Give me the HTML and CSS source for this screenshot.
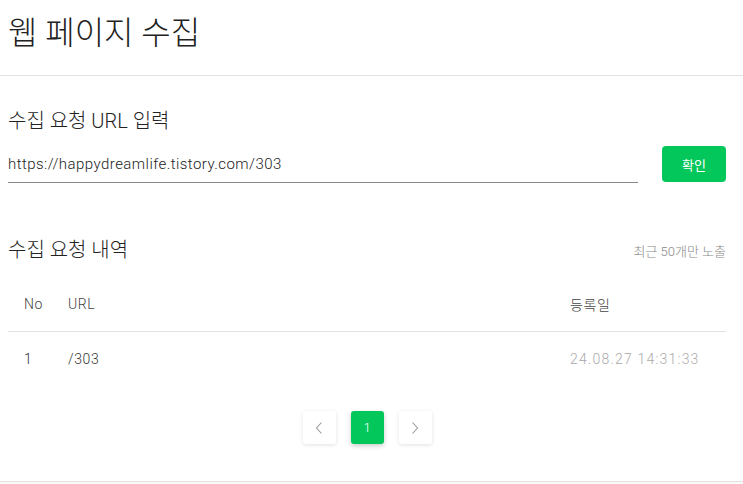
FILE: index.html
```html
<!DOCTYPE html>
<html lang="ko">
<head>
<meta charset="utf-8">
<title>웹 페이지 수집</title>
<link rel="stylesheet" href="styles.css">
</head>
<body>
<header class="page-header">
  <h1 class="page-title">웹 페이지 수집</h1>
</header>
<main class="content">
  <section class="section">
    <h2 class="section-title">수집 요청 URL 입력</h2>
    <div class="input-row">
      <input class="url-input" type="text" value="https://happydreamlife.tistory.com/303">
      <button class="btn-confirm">확인</button>
    </div>
  </section>
  <section class="section history">
    <div class="history-head">
      <h2 class="section-title">수집 요청 내역</h2>
      <span class="note">최근 50개만 노출</span>
    </div>
    <div class="table">
      <div class="row head">
        <span class="c-no">No</span>
        <span class="c-url">URL</span>
        <span class="c-date">등록일</span>
      </div>
      <div class="row body">
        <span class="c-no">1</span>
        <span class="c-url">/303</span>
        <span class="c-date date">24.08.27 14:31:33</span>
      </div>
    </div>
    <nav class="pager">
      <button class="pg-btn" aria-label="이전">
        <svg width="10" height="14" viewBox="0 0 10 14"><path d="M7.5 1.5 L2.5 7 L7.5 12.5" fill="none" stroke="#999" stroke-width="1.1"/></svg>
      </button>
      <button class="pg-btn active">1</button>
      <button class="pg-btn" aria-label="다음">
        <svg width="10" height="14" viewBox="0 0 10 14"><path d="M2.5 1.5 L7.5 7 L2.5 12.5" fill="none" stroke="#999" stroke-width="1.1"/></svg>
      </button>
    </nav>
  </section>
</main>
<footer class="page-footer"></footer>
</body>
</html>
```
FILE: styles.css
```css
html, body {
  margin: 0;
  padding: 0;
  background: #fff;
}
body {
  font-family: "Roboto", "Noto Sans CJK KR", sans-serif;
  font-weight: 300;
  color: #222;
}
.page-header {
  border-bottom: 1px solid #e2e2e2;
  height: 76px;
  box-sizing: border-box;
  padding: 10px 8px 0;
}
.page-title {
  margin: 0;
  font-size: 32px;
  font-weight: 300;
  line-height: 46px;
}
.content {
  padding: 0 17px 0 8px;
}
.section {
  padding-top: 30px;
}
.section-title {
  margin: 0;
  font-size: 20px;
  font-weight: 300;
  line-height: 30px;
}
.input-row {
  display: flex;
  align-items: flex-start;
  gap: 24px;
  margin-top: 11px;
}
.url-input {
  flex: 1;
  border: none;
  border-bottom: 1px solid #888;
  font-family: "Roboto", "Noto Sans CJK KR", sans-serif;
  font-size: 15px;
  font-weight: 300;
  letter-spacing: 0.45px;
  color: #222;
  padding: 7px 0 8px;
  outline: none;
  margin: 0;
  height: 36px;
  box-sizing: border-box;
}
.btn-confirm {
  width: 64px;
  height: 36px;
  margin-top: -1px;
  background: #03c75a;
  color: #fff;
  border: none;
  border-radius: 4px;
  font-family: "Noto Sans CJK KR", sans-serif;
  font-size: 13px;
  font-weight: 400;
}
.history {
  padding-top: 52px;
}
.history-head {
  display: flex;
  justify-content: space-between;
  align-items: center;
}
.note {
  font-size: 13px;
  color: #888;
}
.table {
  margin-top: 11px;
  font-size: 14px;
  letter-spacing: 0.6px;
}
.row {
  display: flex;
  align-items: center;
  padding: 0 16px;
}
.row.head {
  height: 55px;
  border-bottom: 1px solid #e2e2e2;
  color: #444;
}
.row.body {
  height: 54px;
  color: #333;
}
.c-no { width: 44px; }
.c-url { flex: 1; }
.c-date { width: 140px; }
.date {
  color: #aaa;
  letter-spacing: 1.2px;
}
.pager {
  display: flex;
  justify-content: center;
  gap: 15px;
  margin-top: 25px;
  padding-bottom: 37px;
}
.pg-btn {
  width: 33px;
  height: 33px;
  border: none;
  border-radius: 3px;
  background: #fff;
  box-shadow: 0 1px 4px rgba(0,0,0,0.12);
  display: flex;
  align-items: center;
  justify-content: center;
  padding: 0;
  font-family: "Roboto", sans-serif;
  font-size: 13px;
  font-weight: 300;
}
.pg-btn.active {
  background: #03c75a;
  color: #fff;
  box-shadow: 0 2px 5px rgba(0,0,0,0.2);
}
.page-footer {
  border-top: 1px solid #e2e2e2;
  background: #fafafa;
  height: 10px;
}
```
